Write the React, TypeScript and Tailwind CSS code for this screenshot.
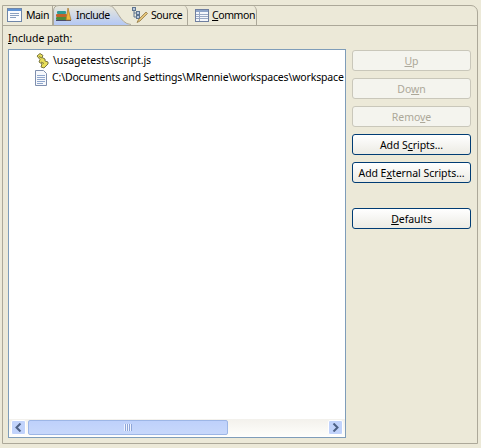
import type { ReactNode } from "react";

function MainIcon() {
  return (
    <svg width="16" height="16" viewBox="0 0 16 16" className="shrink-0">
      <rect x="0.5" y="1.5" width="14" height="13" fill="#fbfcfe" stroke="#6f86a8" />
      <rect x="1" y="2" width="13" height="2" fill="#5f93d6" />
      <path d="M3 6.5h9M3 8.5h9M3 10.5h6" stroke="#8aa0c0" />
    </svg>
  );
}

function IncludeIcon() {
  return (
    <svg width="16" height="16" viewBox="0 0 16 16" className="shrink-0">
      <rect x="1" y="4" width="9" height="3" rx="1" fill="#2f9a92" />
      <rect x="0" y="7" width="11" height="3" rx="1" fill="#c2632a" />
      <rect x="0" y="10" width="11" height="3" rx="1" fill="#4e8a3c" />
      <path d="M0 13.5h15" stroke="#4a4a68" />
      <path d="M12 1l-2 12h5z" fill="#efb83a" stroke="#a9782a" strokeWidth="0.7" />
    </svg>
  );
}

function SourceIcon() {
  return (
    <svg width="16" height="16" viewBox="0 0 16 16" className="shrink-0">
      <rect x="0.5" y="0.5" width="3" height="3" fill="#b9c8dd" stroke="#5f7590" />
      <rect x="4.5" y="4.5" width="3" height="3" fill="#b9c8dd" stroke="#5f7590" />
      <rect x="4.5" y="8.5" width="3" height="3" fill="#b9c8dd" stroke="#5f7590" />
      <path d="M2 4v6h2M2 6h2" stroke="#5f7590" fill="none" />
      <path d="M5 15.500l1.500-3 7.500-7.500 1.500 1.500-7.500 7.500z" fill="#e3c47a" stroke="#8a6d36" strokeWidth="0.7" />
    </svg>
  );
}

function CommonIcon() {
  return (
    <svg width="14" height="13" viewBox="0 0 14 13" className="shrink-0">
      <rect x="0.5" y="0.5" width="13" height="12" fill="#f5f7fb" stroke="#6f7fa0" />
      <rect x="1" y="1" width="12" height="2" fill="#8ea4c8" />
      <path d="M1 5.5h12M1 7.5h12M1 9.5h12M4.5 3v9" stroke="#9aa9c4" />
    </svg>
  );
}

function ScriptIcon() {
  return (
    <svg width="16" height="16" viewBox="0 0 16 16" className="shrink-0">
      <path d="M3 3l3-2.500 3 2-1 2 3 1.500 0 2 3 1 0 2-4 4-3-1 1-3-3-2 1-2.500z" fill="#e8de58" stroke="#7a7640" />
      <path d="M5 3.500l3 1.500M7 9l3 1.500" stroke="#7a7640" />
    </svg>
  );
}

function FileIcon() {
  return (
    <svg width="16" height="16" viewBox="0 0 16 16" className="shrink-0">
      <path d="M1.500 0.500h8l3 3v12h-11z" fill="#f6f8fc" stroke="#7f8fae" />
      <path d="M3 5.500h8M3 7.500h8M3 9.500h8M3 11.500h8M3 13.500h6" stroke="#8fa6cc" />
    </svg>
  );
}

function Tab({ icon, children, className }: { icon: ReactNode; children: ReactNode; className: string }) {
  return <div className={`flex items-center ${className}`}>{icon}<span className="pt-[2px] whitespace-nowrap tracking-[-0.4px]">{children}</span></div>;
}

function Btn({ children, disabled, mt }: { children: ReactNode; disabled?: boolean; mt: string }) {
  return (
    <button
      className={`w-[119px] h-[21px] ${mt} rounded-[3px] border flex items-center justify-center whitespace-nowrap pt-[2px] ${
        disabled
          ? "border-[#c9c7ba] bg-[#f4f4ee] text-[#aca899]"
          : "border-[#003c74] bg-gradient-to-b from-[#ffffff] to-[#ecebe4] text-black"
      }`}
    >
      <span>{children}</span>
    </button>
  );
}

export default function App() {
  return (
    <div className="w-[481px] h-[448px] bg-[#ece9d8] pt-[5px] pl-[2px] overflow-hidden text-[10.5px] tracking-[-0.05px] text-black font-['Noto_Sans',sans-serif]">
      <div className="w-[476px] h-[439px] border border-[#aca899] rounded-tr-[7px]">
        {/* Tabs */}
        <div className="relative h-[20px] flex items-end border-b border-[#aca899]">
          <Tab icon={<MainIcon />} className="h-[20px] w-[50px] pl-[4px] gap-[3px] border-r border-[#aca899] rounded-tl-[5px]">
            Main
          </Tab>
          <div className="relative h-[20px] w-[78px]">
            <svg width="78" height="20" viewBox="0 0 78 20" className="absolute left-0 top-0">
              <defs>
                <linearGradient id="act" x1="0" y1="0" x2="0" y2="1">
                  <stop offset="0" stopColor="#ece9d8" />
                  <stop offset="1" stopColor="#b4c8f5" />
                </linearGradient>
              </defs>
              <path d="M0 20V6Q0 0 6 0H56C64 0 66 19 78 20z" fill="url(#act)" />
              <path d="M0.5 20V6Q0.5 0.5 6 0.5H56C64 0.5 66 19 78 19.500" fill="none" stroke="#aca899" />
            </svg>
            <Tab icon={<IncludeIcon />} className="relative h-[20px] pl-[3px] gap-[4px]">
              Include
            </Tab>
          </div>
          <Tab icon={<SourceIcon />} className="h-[20px] w-[57px] pl-[1px] gap-[3px] border-r border-[#aca899] rounded-tr-[6px]">
            Source
          </Tab>
          <Tab icon={<CommonIcon />} className="h-[20px] w-[69px] pl-[7px] gap-[3px] border-r border-[#aca899] rounded-tr-[6px]">
            <u>C</u>ommon
          </Tab>
        </div>

        {/* Body */}
        <div className="pl-[5px] pt-[4px]">
          <div className="h-[19px] leading-[16px]">
            <u>I</u>nclude path:
          </div>
          <div className="flex items-start">
            <div className="w-[338px] h-[389px] border border-[#7f9db9] bg-white flex flex-col overflow-hidden">
              <div className="flex-1 pt-[2px] pl-[25px]">
                <div className="h-[17px] flex items-center gap-[2px] whitespace-nowrap">
                  <ScriptIcon />
                  <span className="ml-[1px]">\usagetests\script.js</span>
                </div>
                <div className="h-[17px] flex items-center gap-[2px] whitespace-nowrap">
                  <FileIcon />
                  <span className="tracking-[-0.16px]">C:\Documents and Settings\MRennie\workspaces\workspace</span>
                </div>
              </div>
              {/* Scrollbar */}
              <div className="h-[17px] mb-[1px] flex items-center px-[2px] bg-gradient-to-b from-[#f3f1ec] to-[#fefefb] gap-[1px]">
                <div className="w-[15px] h-[15px] rounded-[2px] border border-white bg-[#c1d3fb] flex items-center justify-center">
                  <svg width="7" height="9" viewBox="0 0 7 9">
                    <path d="M5.500 0.500L1.500 4.500l4 4" fill="none" stroke="#4d6185" strokeWidth="2" />
                  </svg>
                </div>
                <div className="w-[200px] h-[15px] ml-[1px] rounded-[2px] border border-[#9db6e6] bg-gradient-to-b from-[#bed1fb] to-[#c8d8fb] flex items-center justify-center">
                  <div className="w-[8px] h-[7px] bg-[repeating-linear-gradient(90deg,#eef3ff_0,#eef3ff_1px,#8ea6d8_1px,#8ea6d8_2px)]" />
                </div>
                <div className="flex-1" />
                <div className="w-[15px] h-[15px] rounded-[2px] border border-white bg-[#c1d3fb] flex items-center justify-center">
                  <svg width="7" height="9" viewBox="0 0 7 9">
                    <path d="M1.500 0.500l4 4-4 4" fill="none" stroke="#4d6185" strokeWidth="2" />
                  </svg>
                </div>
              </div>
            </div>
            <div className="ml-[6px] flex flex-col">
              <Btn disabled mt="mt-[1px]"><u>U</u>p</Btn>
              <Btn disabled mt="mt-[7px]">Do<u>w</u>n</Btn>
              <Btn disabled mt="mt-[7px]">Remo<u>v</u>e</Btn>
              <Btn mt="mt-[7px]">Add S<u>c</u>ripts...</Btn>
              <Btn mt="mt-[7px]">Add E<u>x</u>ternal Scripts...</Btn>
              <Btn mt="mt-[25px]"><u>D</u>efaults</Btn>
            </div>
          </div>
        </div>
      </div>
    </div>
  );
}
